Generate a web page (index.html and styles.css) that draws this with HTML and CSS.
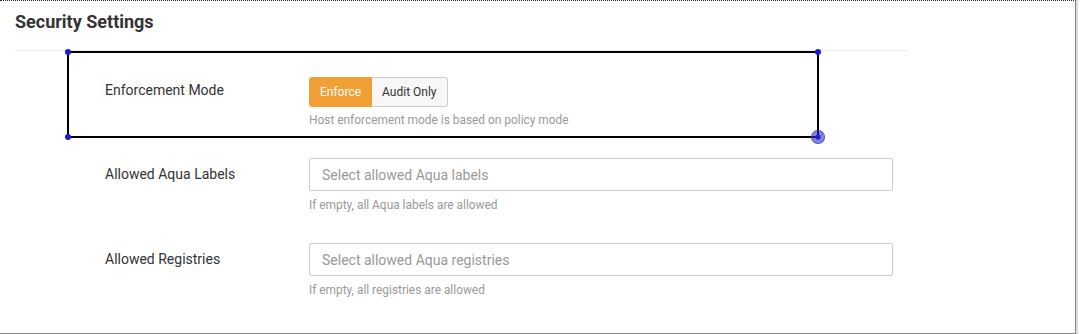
FILE: index.html
```html
<!DOCTYPE html>
<html lang="en">
<head>
    <meta charset="UTF-8">
    <meta name="viewport" content="width=device-width, initial-scale=1.0">
    <title>Security Settings</title>
    <link rel="stylesheet" href="styles.css">
</head>
<body>
    <div class="settings-panel">
        <div class="panel-header">
            <h2 class="panel-title">Security Settings</h2>
        </div>

        <div class="panel-body">
            <div class="form-row form-row-first">
                <label class="form-label form-label-tight">Enforcement Mode</label>
                <div class="form-control-wrap">
                    <div class="btn-group">
                        <button class="btn btn-active">Enforce</button>
                        <button class="btn">Audit Only</button>
                    </div>
                    <p class="help-text">Host enforcement mode is based on policy mode</p>
                </div>
                <div class="selection-box">
                    <span class="handle handle-tl"></span>
                    <span class="handle handle-tr"></span>
                    <span class="handle handle-bl"></span>
                    <span class="handle-big"></span>
                </div>
            </div>

            <div class="form-row">
                <label class="form-label">Allowed Aqua Labels</label>
                <div class="form-control-wrap">
                    <input class="text-input" type="text" placeholder="Select allowed Aqua labels">
                    <p class="help-text">If empty, all Aqua labels are allowed</p>
                </div>
            </div>

            <div class="form-row">
                <label class="form-label">Allowed Registries</label>
                <div class="form-control-wrap">
                    <input class="text-input" type="text" placeholder="Select allowed Aqua registries">
                    <p class="help-text">If empty, all registries are allowed</p>
                </div>
            </div>
        </div>
    </div>
</body>
</html>
```

FILE: styles.css
```css
:root {
    --text: #333;
    --muted: #9a9a9a;
    --orange: #f0a034;
    --border: #cccccc;
}

* {
    box-sizing: border-box;
}

body {
    margin: 0;
    font-family: Roboto, 'Liberation Sans', Arial, sans-serif;
    color: var(--text);
    background: #fff;
}

.settings-panel {
    width: 1076px;
    height: 334px;
    border-top: 1px dotted #222;
    border-right: 1px solid #888;
    border-bottom: 1px solid #888;
    box-shadow: 2px 0 0 #ddd;
    background: #fff;
}

.panel-header {
    margin: 0 167px 0 15px;
    height: 50px;
    border-bottom: 1px solid #eee;
}

.panel-title {
    margin: 0;
    padding-top: 9px;
    font-size: 18px;
    font-weight: 700;
    line-height: 24px;
    color: #333;
}

.panel-body {
    padding-left: 105px;
}

.form-row {
    position: relative;
    display: grid;
    grid-template-columns: 204px 584px;
    padding-top: 29px;
}

.form-row-first {
    padding-top: 26px;
}

.form-label {
    font-size: 14px;
    line-height: 20px;
    padding-top: 6px;
    color: #333;
}

.form-label-tight {
    padding-top: 3px;
}

.btn-group {
    display: flex;
}

.btn {
    font-family: inherit;
    font-size: 12px;
    height: 30px;
    padding: 0 10px;
    border: 1px solid var(--border);
    background: #f7f7f7;
    color: #333;
}

.btn:first-child {
    border-radius: 3px 0 0 3px;
}

.btn:last-child {
    border-radius: 0 3px 3px 0;
    border-left: none;
}

.btn-active {
    background: var(--orange);
    border-color: var(--orange);
    color: #fff;
}

.text-input {
    display: block;
    width: 100%;
    height: 33px;
    padding: 0 12px;
    font-family: inherit;
    font-size: 14px;
    border: 1px solid var(--border);
    border-radius: 2px;
    color: #333;
}

.text-input::placeholder {
    color: #999;
}

.help-text {
    margin: 6px 0 0;
    font-size: 11.9px;
    line-height: 17px;
    color: var(--muted);
}

.btn-group + .help-text {
    margin-top: 5px;
}

.selection-box {
    position: absolute;
    left: -38px;
    top: 0;
    width: 752px;
    height: 87px;
    border: 2px solid #000;
}

.handle {
    position: absolute;
    width: 6px;
    height: 6px;
    border-radius: 50%;
    background: #1a1ad8;
}

.handle-tl { left: -4px; top: -4px; }
.handle-tr { right: -4px; top: -4px; }
.handle-bl { left: -4px; bottom: -4px; }

.handle-big {
    position: absolute;
    right: -8px;
    bottom: -8px;
    width: 14px;
    height: 14px;
    border-radius: 50%;
    background: radial-gradient(circle, #1a1ad8 0 2px, rgba(40, 40, 200, 0.6) 3px 5px, rgba(60, 60, 210, 0.45) 6px);
    border: 1px solid rgba(40, 40, 180, 0.7);
}
```
